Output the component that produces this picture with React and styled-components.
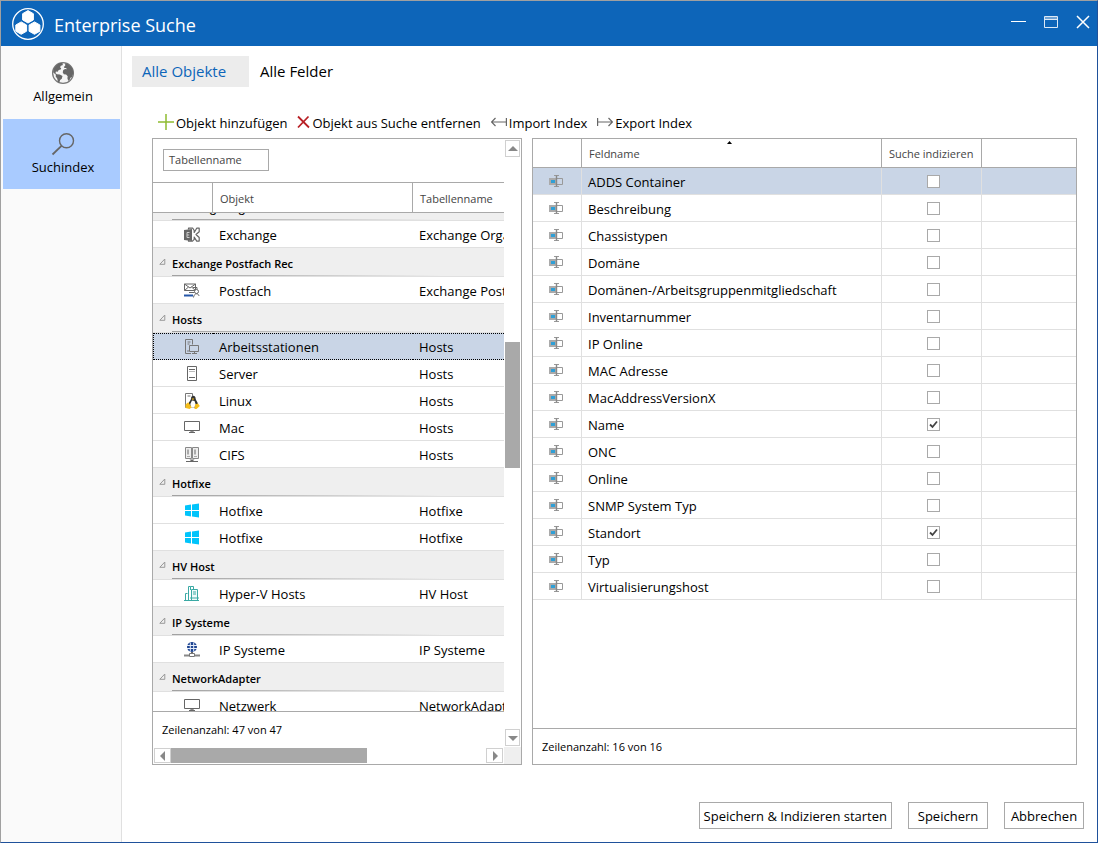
import React, { useLayoutEffect, useRef, useState } from "react";
import styled, { createGlobalStyle, css } from "styled-components";

const GlobalStyle = createGlobalStyle`
  *, *::before, *::after { box-sizing: border-box; }
  body {
    margin: 0;
    color: #000;
    background: #fff;
    font-family: "Segoe UI", "Open Sans", "Noto Sans", sans-serif;
    font-size: 13px;
    line-height: 18px;
  }
  button, input { font: inherit; color: inherit; }
  svg { display: block; flex: none; }
`;

const line = "#a9a9a9";
const rowLine = "#e0e0e0";
const selected = "#c9d5e6";

const Window = styled.div`
  display: flex;
  flex-direction: column;
  height: 100vh;
  min-height: 600px;
  border: 1px solid #a0a0a0;
  border-right-color: #1f519b;
  border-bottom-color: #1f519b;
`;

const TitleBar = styled.header`
  display: flex;
  align-items: center;
  gap: 9px;
  height: 45px;
  padding: 0 6px 0 10px;
  background: #0d65b9;
  color: #fff;
`;

const Title = styled.h1`
  flex: 1;
  margin: 0;
  padding-top: 3px;
  font-size: 18px;
  line-height: 24px;
  font-weight: 400;
`;

const WindowControls = styled.div`
  display: flex;
  gap: 16px;
  padding-bottom: 3px;
`;

const WindowButton = styled.button`
  padding: 0;
  border: 0;
  background: none;
`;

const Body = styled.div`
  display: flex;
  flex: 1;
  min-height: 0;
`;

const Sidebar = styled.nav`
  width: 121px;
  flex: none;
  padding: 2px 1px 0 2px;
  border-right: 1px solid ${rowLine};
  background: #fafafa;
`;

const SideItem = styled.button`
  display: flex;
  flex-direction: column;
  align-items: center;
  gap: 2px;
  width: 100%;
  height: ${(p) => (p.$active ? 70 : 71)}px;
  padding: 13px 0 0 3px;
  border: 0;
  background: ${(p) => (p.$active ? "#a9cbff" : "none")};
`;

const Main = styled.main`
  display: flex;
  flex-direction: column;
  flex: 1;
  min-width: 0;
  padding: 10px 13px 13px 10px;
`;

const Tabs = styled.div`
  display: flex;
  gap: 1px;
`;

const Tab = styled.button`
  width: 117px;
  height: 31px;
  padding: 0 10px 2px;
  border: 0;
  text-align: left;
  font-size: 15px;
  background: ${(p) => (p.$active ? "#ececec" : "none")};
  color: ${(p) => (p.$active ? "#0d65b9" : "#000")};
`;

const Toolbar = styled.div`
  display: flex;
  gap: 10px;
  margin-top: 26px;
  padding-left: 26px;
  height: 25px;
`;

const ToolButton = styled.button`
  display: flex;
  align-items: flex-start;
  gap: 2px;
  height: 20px;
  padding: 0;
  border: 0;
  background: none;
  line-height: 20px;
  white-space: nowrap;
`;

const Panels = styled.div`
  display: flex;
  flex: 1;
  gap: 10px;
  min-height: 0;
  margin: 0 7px 0 20px;
`;

const ObjectPanel = styled.section`
  display: grid;
  grid-template-columns: minmax(0, 1fr) 17px;
  grid-template-rows: minmax(0, 1fr) 17px;
  width: 370px;
  flex: none;
  border: 1px solid ${line};
`;

const FieldPanel = styled.section`
  display: flex;
  flex-direction: column;
  flex: 1;
  min-width: 0;
  border: 1px solid ${line};
`;

const PanelContent = styled.div`
  display: flex;
  flex-direction: column;
  min-width: 0;
  min-height: 0;
`;

const GroupBar = styled.div`
  height: 44px;
  padding: 10px;
  border-bottom: 1px solid ${line};
`;

const GroupChip = styled.button`
  width: 106px;
  height: 22px;
  padding: 0 5px;
  border: 1px solid ${line};
  background: #fff;
  color: #444;
  font-size: 11px;
  line-height: 20px;
  text-align: left;
`;

const Scroller = styled.div`
  flex: 1;
  min-height: 0;
  overflow: hidden;
`;

const Table = styled.table`
  width: 100%;
  table-layout: fixed;
  border-collapse: separate;
  border-spacing: 0;
`;

const HeadCell = styled.th`
  position: relative;
  height: ${(p) => p.$height}px;
  padding: ${(p) => (p.$height > 29 ? "3px" : "2px")} 7px 0;
  border-right: 1px solid ${line};
  border-bottom: 1px solid ${line};
  color: #444;
  font-size: 11px;
  font-weight: 400;
  text-align: left;
  white-space: nowrap;
  &:last-child { border-right: 0; }
`;

const SortMark = styled.span`
  position: absolute;
  top: 2px;
  right: 50%;
`;

const Cell = styled.td`
  height: 27px;
  padding: 2px 0 0 6px;
  border-bottom: 1px solid ${rowLine};
  line-height: 18px;
  white-space: nowrap;
  overflow: hidden;
  ${(p) => p.$lined && css`
    border-right: 1px solid ${rowLine};
    &:last-child { border-right: 0; }
  `}
`;

const IconCell = styled(Cell)`
  padding: 2px 0 0 ${(p) => p.$indent}px;
`;

const CheckCell = styled(Cell)`
  padding: 0 0 0 3px;
`;

const Row = styled.tr`
  background: ${(p) => (p.$selected ? selected : "#fff")};
  ${(p) => p.$focused && css`
    & > td { border-top: 1px dotted #000; border-bottom: 1px dotted #000; padding-top: 1px; }
    & > td:first-child { border-left: 1px dotted #000; padding: 1px 0 0 30px; }
  `}
`;

const GroupCell = styled.th`
  height: 29px;
  padding: 0;
  border-bottom: 1px solid ${rowLine};
  background: #efefef;
  font-size: 11px;
  font-weight: 600;
  text-align: left;
`;

const GroupHead = styled.div`
  display: flex;
  height: 28px;
  padding-left: 6px;
  gap: 6px;
  & > svg { margin-top: 10px; }
`;

const GroupTitle = styled.span`
  flex: 1;
  padding-top: 7px;
  border-bottom: 1px solid;
  border-image: linear-gradient(to right, #a0a0a0, #efefef 270px) 1;
  white-space: nowrap;
`;

const Count = styled.footer`
  height: 36px;
  padding: 9px 9px 0;
  border-top: 1px solid ${line};
  font-size: 11px;
  line-height: 18px;
`;

const ScrollBar = styled.div`
  display: flex;
  flex-direction: ${(p) => (p.$vertical ? "column" : "row")};
  padding: 1px;
  background: #fff;
`;

const ScrollButton = styled.button`
  display: flex;
  align-items: center;
  justify-content: center;
  width: ${(p) => (p.$vertical ? 15 : 17)}px;
  height: ${(p) => (p.$vertical ? 17 : 15)}px;
  flex: none;
  padding: 0;
  border: 1px solid #d0d0d0;
  background: #fff;
`;

const ScrollSpace = styled.div`
  flex: ${(p) => p.$size} 0 0;
`;

const ScrollThumb = styled(ScrollSpace)`
  background: #a9a9a9;
`;

const Corner = styled.div`
  background: #efefef;
`;

const CheckBox = styled.input`
  appearance: none;
  display: block;
  width: 13px;
  height: 13px;
  margin: 0 auto;
  border: 1px solid ${line};
  background: #fff;
  &:checked {
    background: #fff url("data:image/svg+xml,%3Csvg xmlns='http://www.w3.org/2000/svg' viewBox='0 0 11 11'%3E%3Cpath d='M2 5.5 4.5 8 9 2.5' fill='none' stroke='%23444' stroke-width='1.8'/%3E%3C/svg%3E");
  }
`;

const Actions = styled.div`
  display: flex;
  justify-content: flex-end;
  gap: 16px;
  margin-top: 37px;
`;

const ActionButton = styled.button`
  min-width: 80px;
  height: 27px;
  padding: 0 4px;
  border: 1px solid ${line};
  background: #fff;
  white-space: nowrap;
`;

const Logo = () => (
  <svg width="34" height="34" viewBox="0 0 34 34">
    <circle cx="17" cy="17" r="15.3" fill="none" stroke="#fff" strokeWidth="1.3" />
    <g fill="#fff" stroke="#fff" strokeWidth="1" strokeLinejoin="round">
      <path d="M17 3.6l5.4 3.1v6.2L17 16l-5.4-3.1V6.700z" />
      <path d="M10.200 14.900l5.400 3.100v6.200l-5.400 3.100-5.400-3.100V18z" />
      <path d="M23.500 14.900l5.400 3.100v6.200l-5.400 3.100-5.400-3.100V18z" />
    </g>
  </svg>
);

const Globe = () => (
  <svg width="24" height="24" viewBox="0 0 24 24">
    <circle cx="12" cy="12" r="10.400" fill="#f4f4f4" stroke="#777" strokeWidth="1.300" />
    <path fill="#666" d="M3.500 6.500C5 4 7.500 2.200 10.500 1.700l1.500 1-.5 1.500-1.700.6-.8 1.700 1.200.6-.5 1.400-2 .5-1 1.800-1.800-.2-.4 1.600 1.500 1 2.800.2 2.700 1.700-.7 2.600-1.700 1.200-.7 2.700-1.500-.6-.6-3.200-1.600-2.200.2-1.800-2.600-2.200c-.2-1.800.2-3.600 1.200-5.100z" />
    <path fill="#666" d="M14 2.300c3.800.7 6.800 3.200 7.900 6.700l.3 3.700-1.400 3.500-1.300.6-1 2.400-1.300.5-.8-2.400.3-2.100-1.600-1.600-2.300-.3-1.100-2 .6-2.300 1.800-1 1.700.2-.7-1.300-1.600.2-.6-1.200 1.400-1.400z" />
  </svg>
);

const Magnifier = () => (
  <svg width="24" height="24" viewBox="0 0 24 24" fill="none" stroke="#666">
    <circle cx="15.500" cy="8.700" r="7" strokeWidth="1.400" />
    <path d="M10.500 13.800L1.500 22.500" strokeWidth="1.800" />
  </svg>
);

const PlusIcon = () => (
  <svg width="16" height="18" viewBox="0 0 16 18"><path d="M0 9h16M8 1v16" stroke="#8fbc31" strokeWidth="1.500" /></svg>
);
const CrossIcon = () => (
  <svg width="13" height="18" viewBox="0 0 13 18"><path d="M1 3.500l11 11M11.500 3.500L1 14.500" stroke="#b82025" strokeWidth="1.800" /></svg>
);
const ArrowIcon = ({ right }) => (
  <svg width="16" height="18" viewBox="0 0 16 18" fill="none" stroke="#666" strokeWidth="1.200">
    {right ? <path d="M.6 5v8M1 9h14M11.500 5l4 4-4 4" /> : <path d="M15.400 5v8M15 9H1M4.500 5l-4 4 4 4" />}
  </svg>
);
const Triangle = ({ dir }) => {
  const shapes = { up: "M0 7l5-5 5 5z", down: "M0 3h10L5 8z", left: "M7 0v10L2 5z", right: "M3 0v10l5-5z" };
  return <svg width="10" height="10"><path d={shapes[dir]} fill="#888" /></svg>;
};
const Expander = () => (
  <svg width="7" height="7" viewBox="0 0 7 7"><path d="M.8 6.300h5V1z" fill="none" stroke="#999" strokeWidth="1" /></svg>
);

const icons = {
  exchange: (
    <g fill="none" stroke="#666" strokeWidth="1.200">
      <path d="M4.500 2.500V1.200h4.300l1.400 2.300v2L12.700 1.200h2.500v3.600L12 7.500l3.200 3v3.600h-2.500l-2.500-4v2.300L8.500 14.200h-4v-1.500" strokeLinejoin="round" />
      <path d="M0 3l8-1v12l-8-1z" fill="#666" stroke="none" />
      <path d="M5.500 5.500H3v5h2.500M3 8h2.200" stroke="#ccc" strokeWidth="1" />
    </g>
  ),
  mailbox: (
    <g fill="none" stroke="#666">
      <path d="M.5 1h11v6.500H.5zM.5 1l5.500 4 5.500-4M.5 7.500L4.500 4M11.500 7.500L7.500 4" />
      <path d="M5 9.500h5.500M9 4.500h4v2" />
      <circle cx="12.500" cy="8.500" r="2" fill="#fff" />
      <path d="M9.500 14.500c.4-2.500 1.500-3.700 3-3.700s2.300 1 2.500 2.200" />
      <path d="M0 12.500h9" stroke="#2456a8" strokeWidth="2" />
    </g>
  ),
  workstation: (
    <g fill="none" stroke="#777">
      <path d="M7 14.500H1.500V.5h7v5M3.500 3h3M3.500 5h2" />
      <path d="M3.500 12h1" strokeWidth="2" />
      <path d="M5.500 6.500h9v6h-9zM8 14.500h5M10.500 12.500v2" />
    </g>
  ),
  server: (
    <g fill="none" stroke="#666"><path d="M3.500.5h9v14h-9z" /><path d="M5 3.500h6M5 11.500h6" /><path d="M5 5.500h6" stroke="#bbb" /></g>
  ),
  linux: (
    <g>
      <path d="M5 14.500H1.500V.5h7V3M3.500 3h3" fill="none" stroke="#777" />
      <path d="M7 5.500C7 3.500 8 2.700 9.300 2.700s2.300 1 2.300 2.800c0 1.700 2.400 3.300 2.400 6.200L12 14.500H6.500L4.500 11C5 8.500 7 7.500 7 5.500z" fill="#333" />
      <path d="M8 7.500l2.500.4 1.500 4.300-2 2.300H7L6.300 11z" fill="#fff" />
      <path d="M7.500 5.500h2.800L9 7.200zM1.500 11.500l2.700-2.300 3.500 5-2 1.700-4.200-1zM11 11.500l3-1 1.800 2.500-3.300 3H10.500z" fill="#f5bd1b" />
    </g>
  ),
  monitor: (
    <g fill="none" stroke="#666"><path d="M.5 1.500h15v9H.5z" /><path d="M7 11h2v1.500H7zM5 12.500h6" /></g>
  ),
  cifs: (
    <g>
      <path d="M1.500.5h6v11h-6zM8.500.5h6v11h-6z" fill="#eee" stroke="#888" />
      <path d="M3 2.500h2v5H3zM10 2.500h2v5h-2zM3 9h3v1H3zM10 9h3v1h-3z" fill="#aaa" />
      <path d="M5.500 12.500h5L9 14h5v1H2v-1h5z" fill="#666" />
    </g>
  ),
  windows: (
    <path fill="#00c4fb" d="M1 2.500l6-.9v5.400H1zM8 1.500l7-1v6.500H8zM1 8h6v5.400l-6-.9zM8 8h7v6.500l-7-1z" />
  ),
  hyperv: (
    <g fill="none" stroke="#3aa9a4">
      <path d="M3.500 7.500h-2v7h5" /><path d="M6.500 4V.5h-2v14h3M6.500.5h3v3" />
      <path d="M7.500 3.500h6v11h-6z" fill="#effafa" /><path d="M9 6h3M9 8h3M6 12h9" /><path d="M0 14.500h15" />
    </g>
  ),
  ip: (
    <g fill="none">
      <circle cx="8" cy="5" r="5" fill="#1f4592" />
      <path d="M3 3.500h10M3 6.500h10M6.300.5v9M9.700.5v9" stroke="#e7eefb" />
      <path d="M8 10v2" stroke="#666" strokeWidth="2" />
      <path d="M0 13.500h5M11 13.500h5" stroke="#888" strokeWidth="2" />
      <path d="M5.500 11.500h5v3h-5z" stroke="#777" />
    </g>
  ),
  field: (
    <g fill="none">
      <path d="M0 4h8v7H0z" fill="#aaa" />
      <path d="M8 4.500h5.500v6H8" stroke="#999" />
      <path d="M5 1.500h5M5 12.500h5" stroke="#999" />
      <path d="M7.500 1.500v11" stroke="#888" strokeWidth="1.400" />
      <path d="M2 6h4v3H2z" fill="#2f9fd6" />
    </g>
  ),
};

const Icon = ({ name }) => (
  <svg width="16" height="16" viewBox="0 0 16 16">{icons[name]}</svg>
);

const groups = [
  { name: "Exchange Organisation", rows: [["exchange", "Exchange", "Exchange Organisation"]] },
  { name: "Exchange Postfach Rec", rows: [["mailbox", "Postfach", "Exchange Postfach Rec"]] },
  {
    name: "Hosts",
    rows: [
      ["workstation", "Arbeitsstationen", "Hosts"],
      ["server", "Server", "Hosts"],
      ["linux", "Linux", "Hosts"],
      ["monitor", "Mac", "Hosts"],
      ["cifs", "CIFS", "Hosts"],
    ],
  },
  { name: "Hotfixe", rows: [["windows", "Hotfixe", "Hotfixe"], ["windows", "Hotfixe", "Hotfixe"]] },
  { name: "HV Host", rows: [["hyperv", "Hyper-V Hosts", "HV Host"]] },
  { name: "IP Systeme", rows: [["ip", "IP Systeme", "IP Systeme"]] },
  { name: "NetworkAdapter", rows: [["monitor", "Netzwerk", "NetworkAdapter"]] },
];

const fields = [
  "ADDS Container", "Beschreibung", "Chassistypen", "Domäne", "Domänen-/Arbeitsgruppenmitgliedschaft",
  "Inventarnummer", "IP Online", "MAC Adresse", "MacAddressVersionX", "Name", "ONC", "Online",
  "SNMP System Typ", "Standort", "Typ", "Virtualisierungshost",
];

const Col = styled.col`
  width: ${(p) => p.$width}px;
`;

const ObjectColumns = () => (
  <colgroup><Col $width={60} /><Col $width={200} /><col /></colgroup>
);

function ObjectList() {
  const scroller = useRef(null);
  useLayoutEffect(() => {
    scroller.current.scrollTop = 21;
  }, []);
  return (
    <ObjectPanel>
      <PanelContent>
        <GroupBar><GroupChip>Tabellenname</GroupChip></GroupBar>
        <Table>
          <ObjectColumns />
          <thead>
            <tr>
              <HeadCell $height={30} />
              <HeadCell $height={30}>Objekt</HeadCell>
              <HeadCell $height={30}>Tabellenname</HeadCell>
            </tr>
          </thead>
        </Table>
        <Scroller ref={scroller}>
          <Table>
            <ObjectColumns />
            {groups.map((group) => (
              <tbody key={group.name}>
                <tr>
                  <GroupCell colSpan={3}>
                    <GroupHead><Expander /><GroupTitle>{group.name}</GroupTitle></GroupHead>
                  </GroupCell>
                </tr>
                {group.rows.map(([icon, name, table], i) => (
                  <Row key={i} $selected={name === "Arbeitsstationen"} $focused={name === "Arbeitsstationen"}>
                    <IconCell $indent={31}><Icon name={icon} /></IconCell>
                    <Cell>{name}</Cell>
                    <Cell>{table}</Cell>
                  </Row>
                ))}
              </tbody>
            ))}
          </Table>
        </Scroller>
        <Count>Zeilenanzahl: 47 von 47</Count>
      </PanelContent>
      <ScrollBar $vertical>
        <ScrollButton $vertical aria-label="Nach oben"><Triangle dir="up" /></ScrollButton>
        <ScrollSpace $size={185} />
        <ScrollThumb $size={127} />
        <ScrollSpace $size={261} />
        <ScrollButton $vertical aria-label="Nach unten"><Triangle dir="down" /></ScrollButton>
      </ScrollBar>
      <ScrollBar>
        <ScrollButton aria-label="Nach links"><Triangle dir="left" /></ScrollButton>
        <ScrollThumb $size={197} />
        <ScrollSpace $size={119} />
        <ScrollButton aria-label="Nach rechts"><Triangle dir="right" /></ScrollButton>
      </ScrollBar>
      <Corner />
    </ObjectPanel>
  );
}

function FieldList() {
  const [checked, setChecked] = useState({ Name: true, Standort: true });
  return (
    <FieldPanel>
      <Scroller>
        <Table>
          <colgroup>
            <Col $width={49} /><Col $width={300} /><Col $width={100} /><col />
          </colgroup>
          <thead>
            <tr>
              <HeadCell $height={29} />
              <HeadCell $height={29}>
                Feldname
                <SortMark><svg width="5" height="3"><path d="M0 3h5L2.500 0z" /></svg></SortMark>
              </HeadCell>
              <HeadCell $height={29}>Suche indizieren</HeadCell>
              <HeadCell $height={29} />
            </tr>
          </thead>
          <tbody>
            {fields.map((field, i) => (
              <Row key={field} $selected={i === 0}>
                <IconCell $lined $indent={16}><Icon name="field" /></IconCell>
                <Cell $lined>{field}</Cell>
                <CheckCell $lined>
                  <CheckBox
                    type="checkbox"
                    aria-label={field}
                    checked={!!checked[field]}
                    onChange={(e) => setChecked({ ...checked, [field]: e.target.checked })}
                  />
                </CheckCell>
                <Cell $lined />
              </Row>
            ))}
          </tbody>
        </Table>
      </Scroller>
      <Count>Zeilenanzahl: 16 von 16</Count>
    </FieldPanel>
  );
}

export default function App() {
  return (
    <Window>
      <GlobalStyle />
      <TitleBar>
        <Logo />
        <Title>Enterprise Suche</Title>
        <WindowControls>
          <WindowButton aria-label="Minimieren">
            <svg width="16" height="16"><path d="M0 7.500h15" stroke="#fff" /></svg>
          </WindowButton>
          <WindowButton aria-label="Maximieren">
            <svg width="16" height="16" fill="none" stroke="#dce9f6"><path d="M1.500 2.500h13v11h-13z" /><path d="M2 4h12" strokeWidth="2" stroke="#6fa3d5" /><path d="M1.500 5.500h13" /></svg>
          </WindowButton>
          <WindowButton aria-label="Schließen">
            <svg width="16" height="16"><path d="M2 2l12 12M14 2L2 14" stroke="#fff" strokeWidth="1.500" /></svg>
          </WindowButton>
        </WindowControls>
      </TitleBar>
      <Body>
        <Sidebar>
          <SideItem><Globe />Allgemein</SideItem>
          <SideItem $active><Magnifier />Suchindex</SideItem>
        </Sidebar>
        <Main>
          <Tabs>
            <Tab $active>Alle Objekte</Tab>
            <Tab>Alle Felder</Tab>
          </Tabs>
          <Toolbar>
            <ToolButton><PlusIcon />Objekt hinzufügen</ToolButton>
            <ToolButton><CrossIcon />Objekt aus Suche entfernen</ToolButton>
            <ToolButton><ArrowIcon />Import Index</ToolButton>
            <ToolButton><ArrowIcon right />Export Index</ToolButton>
          </Toolbar>
          <Panels>
            <ObjectList />
            <FieldList />
          </Panels>
          <Actions>
            <ActionButton>Speichern &amp; Indizieren starten</ActionButton>
            <ActionButton>Speichern</ActionButton>
            <ActionButton>Abbrechen</ActionButton>
          </Actions>
        </Main>
      </Body>
    </Window>
  );
}
